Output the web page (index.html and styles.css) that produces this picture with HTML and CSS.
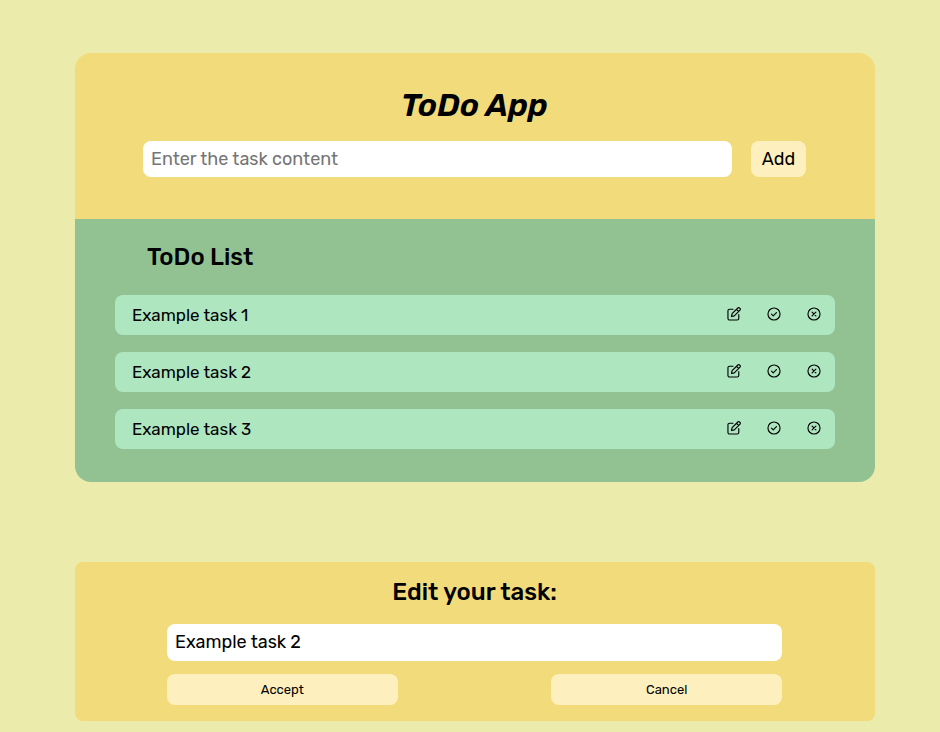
FILE: index.html
```html
<!DOCTYPE html>
<html lang="en">
<head>
<meta charset="utf-8">
<meta name="viewport" content="width=device-width, initial-scale=1">
<title>ToDo App</title>
<link rel="stylesheet" href="styles.css">
</head>
<body>
<svg class="sprite" aria-hidden="true">
  <symbol id="edit" viewBox="1 1 22 22"><path d="M10.500 4.500H5A2.500 2.500 0 0 0 2.500 7v12A2.500 2.500 0 0 0 5 21.500h12a2.500 2.500 0 0 0 2.500-2.500v-6M8 16l1-4.500L18 2.600a1.900 1.900 0 0 1 2.700 0l.7.700a1.900 1.900 0 0 1 0 2.700L12.500 15 8 16zM16 4.800l3.300 3.300"/></symbol>
  <symbol id="done" viewBox="1 1 22 22"><circle cx="12" cy="12" r="9.500"/><path d="M8 12.300l2.800 2.700 5-5.300"/></symbol>
  <symbol id="remove" viewBox="1 1 22 22"><circle cx="12" cy="12" r="9.500"/><path d="M9 9l6 6M15 9l-6 6"/></symbol>
</svg>
<main class="page">
  <div class="app">
    <header class="app-header">
      <h1>ToDo App</h1>
      <form class="add-form">
        <input class="field" type="text" placeholder="Enter the task content" aria-label="Task content">
        <button class="button add" type="button">Add</button>
      </form>
    </header>
    <section class="list">
      <h2>ToDo List</h2>
      <ul>
        <li><span>Example task 1</span><button type="button" aria-label="Edit"><svg><use href="#edit"/></svg></button><button type="button" aria-label="Complete"><svg><use href="#done"/></svg></button><button type="button" aria-label="Delete"><svg><use href="#remove"/></svg></button></li>
        <li><span>Example task 2</span><button type="button" aria-label="Edit"><svg><use href="#edit"/></svg></button><button type="button" aria-label="Complete"><svg><use href="#done"/></svg></button><button type="button" aria-label="Delete"><svg><use href="#remove"/></svg></button></li>
        <li><span>Example task 3</span><button type="button" aria-label="Edit"><svg><use href="#edit"/></svg></button><button type="button" aria-label="Complete"><svg><use href="#done"/></svg></button><button type="button" aria-label="Delete"><svg><use href="#remove"/></svg></button></li>
      </ul>
    </section>
  </div>
  <form class="edit-panel">
    <h2><label for="edit-task">Edit your task:</label></h2>
    <input class="field" id="edit-task" type="text" value="Example task 2">
    <div class="actions">
      <button class="button" type="button">Accept</button>
      <button class="button" type="button">Cancel</button>
    </div>
  </form>
</main>
</body>
</html>
```
FILE: styles.css
```css
* {
  box-sizing: border-box;
  margin: 0;
  padding: 0;
}

body {
  background: #ebebab;
  color: #000;
  font: 17px/20px Rubik, Roboto, sans-serif;
}

.sprite {
  display: none;
}

.page {
  max-width: 820px;
  margin-left: auto;
  margin-right: auto;
  padding: 53px 5px 11px 15px;
}

.app {
  border-radius: 16px;
  overflow: hidden;
}

.app-header {
  padding: 32px 69px 42px 68px;
  background: #f2db7b;
}

h1 {
  margin-bottom: 16px;
  font-size: 32px;
  font-weight: 600;
  font-style: italic;
  line-height: 40px;
  text-align: center;
}

h2 {
  font-size: 24px;
  font-weight: 500;
  line-height: 28px;
}

.add-form {
  display: flex;
  gap: 19px;
}

.field {
  flex: 1;
  width: 100%;
  height: 36px;
  padding: 0 8px;
  border: 0;
  border-radius: 8px;
  background: #fff;
  color: #000;
  font: inherit;
  font-size: 18px;
}

.field::placeholder {
  color: #757575;
}

.button {
  border: 0;
  border-radius: 8px;
  background: #fdf0be;
  color: #000;
  font: inherit;
  font-size: 13px;
}

.add {
  width: 55px;
  font-size: 18px;
}

.list {
  padding: 24px 40px 33px;
  background: #92c292;
}

.list h2 {
  padding-left: 32px;
}

ul {
  display: grid;
  gap: 17px;
  margin-top: 24px;
  list-style: none;
}

li {
  display: flex;
  align-items: center;
  height: 40px;
  padding: 0 1px 0 17px;
  border-radius: 8px;
  background: #aee6c0;
}

li span {
  flex: 1;
}

li button {
  display: grid;
  place-items: center;
  width: 40px;
  height: 40px;
  padding-bottom: 2px;
  border: 0;
  background: none;
  color: inherit;
}

li svg {
  width: 14px;
  height: 14px;
  fill: none;
  stroke: currentColor;
  stroke-width: 1.8;
  stroke-linecap: round;
  stroke-linejoin: round;
}

.edit-panel {
  margin-top: 80px;
  padding: 16px 93px 16px 92px;
  border-radius: 8px;
  background: #f2db7b;
  text-align: center;
}

.edit-panel .field {
  height: 37px;
  margin-top: 18px;
  padding-bottom: 1px;
}

.actions {
  display: flex;
  justify-content: space-between;
  margin-top: 13px;
}

.actions .button {
  width: 37.5%;
  height: 31px;
}
```
